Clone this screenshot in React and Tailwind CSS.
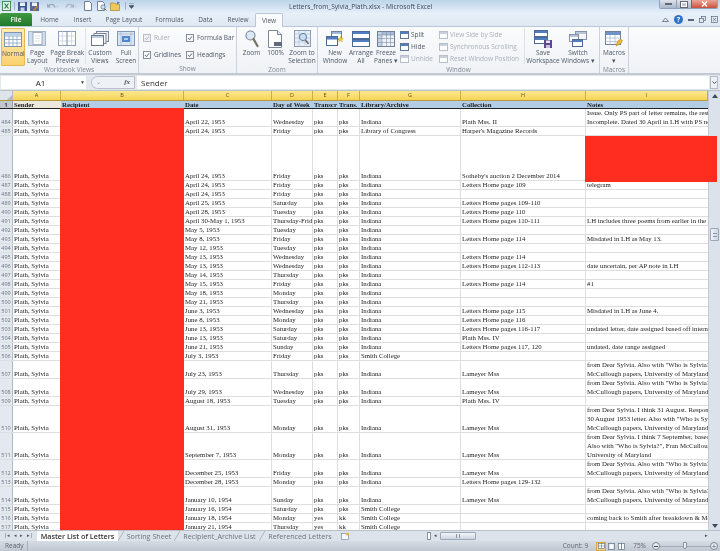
import { Fragment } from 'react'

const serif = "font-['Liberation_Serif',serif]"
const ui = "font-['Open_Sans',sans-serif]"

const heights = { 1: 'h-[9px]', 2: 'h-[18px]', 3: 'h-[27px]', 5: 'h-[45px]' }

const columns = [
  { key: 'a', w: 'w-[48px]' },
  { key: 'b', w: 'w-[123px]' },
  { key: 'c', w: 'w-[88px]' },
  { key: 'd', w: 'w-[41px]' },
  { key: 'e', w: 'w-[25px]' },
  { key: 'f', w: 'w-[22px]' },
  { key: 'g', w: 'w-[101px]' },
  { key: 'h', w: 'w-[125px]' },
  { key: 'i', w: 'w-[122px]' },
]

const colLetters = ['A', 'B', 'C', 'D', 'E', 'F', 'G', 'H', 'I']

const dear = ['from Dear Sylvia. Also with "Who is Sylvia?", Fran', 'McCullough papers, University of Maryland']

// num, lines, date, day, e, f, library, collection, notes
const rows = [
  [484, 2, 'April 22, 1953', 'Wednesday', 'pks', 'pks', 'Indiana', 'Plath Mss. II', ['Issue. Only PS part of letter remains, the rest', 'Incomplete. Dated 30 April in LH with PS note']],
  [485, 1, 'April 24, 1953', 'Friday', 'pks', 'pks', 'Library of Congress', "Harper's Magazine Records"],
  [486, 5, 'April 24, 1953', 'Friday', 'pks', 'pks', 'Indiana', "Sotheby's auction 2 December 2014"],
  [487, 1, 'April 24, 1953', 'Friday', 'pks', 'pks', 'Indiana', 'Letters Home page 109', ['telegram']],
  [488, 1, 'April 24, 1953', 'Friday', 'pks', 'pks', 'Indiana'],
  [489, 1, 'April 25, 1953', 'Saturday', 'pks', 'pks', 'Indiana', 'Letters Home pages 109-110'],
  [490, 1, 'April 28, 1953', 'Tuesday', 'pks', 'pks', 'Indiana', 'Letters Home page 110'],
  [491, 1, 'April 30-May 1, 1953', 'Thursday-Friday', 'pks', 'pks', 'Indiana', 'Letters Home pages 110-111', ['LH includes three poems from earlier in the month']],
  [492, 1, 'May 5, 1953', 'Tuesday', 'pks', 'pks', 'Indiana'],
  [493, 1, 'May 8, 1953', 'Friday', 'pks', 'pks', 'Indiana', 'Letters Home page 114', ['Misdated in LH as May 13.']],
  [494, 1, 'May 12, 1953', 'Tuesday', 'pks', 'pks', 'Indiana'],
  [495, 1, 'May 13, 1953', 'Wednesday', 'pks', 'pks', 'Indiana', 'Letters Home page 114'],
  [496, 1, 'May 13, 1953', 'Wednesday', 'pks', 'pks', 'Indiana', 'Letters Home pages 112-113', ['date uncertain, per AP note in LH']],
  [497, 1, 'May 14, 1953', 'Thursday', 'pks', 'pks', 'Indiana'],
  [498, 1, 'May 15, 1953', 'Friday', 'pks', 'pks', 'Indiana', 'Letters Home page 114', ['#1']],
  [499, 1, 'May 18, 1953', 'Monday', 'pks', 'pks', 'Indiana'],
  [500, 1, 'May 21, 1953', 'Thursday', 'pks', 'pks', 'Indiana'],
  [501, 1, 'June 3, 1953', 'Wednesday', 'pks', 'pks', 'Indiana', 'Letters Home page 115', ['Misdated in LH as June 4.']],
  [502, 1, 'June 8, 1953', 'Monday', 'pks', 'pks', 'Indiana', 'Letters Home page 116'],
  [503, 1, 'June 13, 1953', 'Saturday', 'pks', 'pks', 'Indiana', 'Letters Home pages 116-117', ['undated letter, date assigned based off internal']],
  [504, 1, 'June 13, 1953', 'Saturday', 'pks', 'pks', 'Indiana', 'Plath Mss. IV'],
  [505, 1, 'June 21, 1953', 'Sunday', 'pks', 'pks', 'Indiana', 'Letters Home pages 117, 120', ['undated, date range assigned']],
  [506, 1, 'July 3, 1953', 'Friday', 'pks', 'pks', 'Smith College'],
  [507, 2, 'July 23, 1953', 'Thursday', 'pks', 'pks', 'Indiana', 'Lameyer Mss', dear],
  [508, 2, 'July 29, 1953', 'Wednesday', 'pks', 'pks', 'Indiana', 'Lameyer Mss', dear],
  [509, 1, 'August 18, 1953', 'Tuesday', 'pks', 'pks', 'Indiana', 'Plath Mss. IV'],
  [510, 3, 'August 31, 1953', 'Monday', 'pks', 'pks', 'Indiana', 'Lameyer Mss', ['from Dear Sylvia. I think 31 August. Responds to', '30 August 1953 letter. Also with "Who is Sylvia?"', 'McCullough papers, University of Maryland']],
  [511, 3, 'September 7, 1953', 'Monday', 'pks', 'pks', 'Indiana', 'Lameyer Mss', ['from Dear Sylvia. I think 7 September, based on', 'Also with "Who is Sylvia?", Fran McCullough papers', 'University of Maryland']],
  [512, 2, 'December 25, 1953', 'Friday', 'pks', 'pks', 'Indiana', 'Lameyer Mss', dear],
  [513, 1, 'December 28, 1953', 'Monday', 'pks', 'pks', 'Indiana', 'Letters Home pages 129-132'],
  [514, 2, 'January 10, 1954', 'Sunday', 'pks', 'pks', 'Indiana', 'Lameyer Mss', dear],
  [515, 1, 'January 16, 1954', 'Saturday', 'pks', 'pks', 'Smith College'],
  [516, 1, 'January 18, 1954', 'Monday', 'yes', 'kk', 'Smith College', '', ['coming back to Smith after breakdown & McLean']],
  [517, 1, 'January 21, 1954', 'Thursday', 'yes', 'kk', 'Smith College'],
]

function Cell({ w, children, className = '' }) {
  return (
    <div className={`${w} shrink-0 h-full border-r border-[#dcdee2] pl-[1px] overflow-hidden flex flex-col justify-end whitespace-nowrap ${className}`}>
      {children}
    </div>
  )
}

function SheetRow({ row }) {
  const [num, lines, date, day, e, f, lib, coll, notes] = row
  return (
    <div className={`flex shrink-0 ${heights[lines]} border-b border-[#dcdee2] leading-[9px]`}>
      <div className={`w-[13px] shrink-0 bg-[#e4e8ef] border-r border-[#b4bac4] text-[5.5px] leading-[8px] text-[#6b7480] flex items-end justify-center ${ui}`}>{num}</div>
      <Cell w="w-[48px]">Plath, Sylvia</Cell>
      <Cell w="w-[123px]" />
      <Cell w="w-[88px]">{date}</Cell>
      <Cell w="w-[41px]">{day}</Cell>
      <Cell w="w-[25px]">{e}</Cell>
      <Cell w="w-[22px]">{f}</Cell>
      <Cell w="w-[101px]">{lib}</Cell>
      <Cell w="w-[125px]">{coll}</Cell>
      <Cell w="w-[122px]" className="border-r-0">
        {notes && notes.map((n) => <div key={n}>{n}</div>)}
      </Cell>
    </div>
  )
}

function NormalIcon() {
  return (
    <svg width="18" height="15" viewBox="0 0 18 15">
      <rect x=".5" y=".5" width="17" height="14" fill="#fff" stroke="#7d93b2" />
      <path d="M.5 4h17M.5 7.5h17M.5 11h17M5 .5v14M9 .5v14M13 .5v14" stroke="#8aa3c4" strokeWidth=".8" />
      <rect x="1" y="1" width="16" height="3" fill="#bcd0e8" />
    </svg>
  )
}

function PageLayoutIcon() {
  return (
    <svg width="18" height="15" viewBox="0 0 18 15">
      <rect x=".5" y=".5" width="17" height="14" fill="#cfdcec" stroke="#a3b4c9" />
      <rect x="5" y="1.5" width="9" height="12" fill="#fff" stroke="#8c9db3" strokeWidth=".8" />
      <path d="M7 5h5M7 7.5h5M7 10h5" stroke="#ccd6e3" strokeWidth=".7" />
    </svg>
  )
}

function BreakIcon() {
  return (
    <svg width="18" height="15" viewBox="0 0 18 15">
      <rect x=".5" y=".5" width="17" height="14" fill="#fff" stroke="#8c9db3" />
      <path d="M.5 5h17M.5 10h17M4.5 .5v14M13.5 .5v14" stroke="#c8d2de" strokeWidth=".8" />
      <path d="M9 .5v14" stroke="#7088aa" strokeWidth="1" />
    </svg>
  )
}

function CustomViewsIcon() {
  return (
    <svg width="18" height="15" viewBox="0 0 18 15">
      <rect x="5.5" y=".5" width="12" height="10" fill="#eef2f7" stroke="#7b8698" />
      <rect x="3" y="2.5" width="12" height="10" fill="#f5f7fa" stroke="#7b8698" />
      <rect x=".5" y="4.5" width="12" height="10" fill="#fff" stroke="#6a7688" />
      <rect x="1" y="5" width="11" height="2" fill="#bcd0e8" />
    </svg>
  )
}

function FullScreenIcon() {
  return (
    <svg width="18" height="15" viewBox="0 0 18 15">
      <rect x=".5" y=".5" width="17" height="14" fill="#dbe6f3" stroke="#7f96b5" />
      <path d="M.5 3h17M4 .5v14M14 .5v14" stroke="#9eb3cf" strokeWidth=".7" />
      <rect x="5" y="5" width="8" height="6" fill="#4f86cc" />
      <rect x="7" y="7" width="4" height="2" fill="#a8cdf2" />
    </svg>
  )
}

function ZoomIcon() {
  return (
    <svg width="14" height="18" viewBox="0 0 14 18">
      <circle cx="5.5" cy="5.5" r="4.5" fill="#dbe8f6" stroke="#75849a" strokeWidth="1.1" />
      <path d="M8.5 9l4 7" stroke="#77705f" strokeWidth="2.2" strokeLinecap="round" />
    </svg>
  )
}

function HundredIcon() {
  return (
    <svg width="15" height="18" viewBox="0 0 15 18">
      <path d="M.5.5h9l4 4v13H.5z" fill="#fff" stroke="#7b8698" />
      <path d="M9.5.5v4h4" fill="#e3e8ef" stroke="#7b8698" />
      <rect x="6" y="12" width="8" height="4" fill="#5f6b7c" />
    </svg>
  )
}

function SelectionIcon() {
  return (
    <svg width="17" height="17" viewBox="0 0 17 17">
      <rect x=".5" y=".5" width="16" height="16" fill="#e7eef7" stroke="#8a9bb2" />
      <path d="M.5 4h16M.5 8h16M.5 12h16M5 .5v16M11 .5v16" stroke="#b4c4d8" strokeWidth=".7" />
      <circle cx="9" cy="7" r="3.6" fill="#c9def3" stroke="#5f7da3" />
      <path d="M11.5 10l3 4" stroke="#6d6a5d" strokeWidth="1.6" />
    </svg>
  )
}

function NewWindowIcon() {
  return (
    <svg width="18" height="16" viewBox="0 0 18 16">
      <rect x="5.5" y=".5" width="10" height="8" fill="#fff" stroke="#6f7f96" />
      <rect x=".5" y="5.5" width="11" height="9" fill="#fff" stroke="#4c6a96" />
      <rect x="1" y="6" width="10" height="2.5" fill="#4f7fc0" />
      <rect x="6" y="1" width="9" height="2" fill="#9db8db" />
      <path d="M14.5 5.5l.9 1.8 1.9.3-1.4 1.3.4 1.9-1.8-1-1.8 1 .4-1.9-1.4-1.3 1.9-.3z" fill="#f3cf3d" stroke="#c59a1a" strokeWidth=".4" />
    </svg>
  )
}

function ArrangeIcon() {
  return (
    <svg width="18" height="16" viewBox="0 0 18 16">
      <rect x=".5" y=".5" width="17" height="7" fill="#fff" stroke="#4c6a96" />
      <rect x="1" y="1" width="16" height="2" fill="#4f7fc0" />
      <rect x=".5" y="8.5" width="17" height="7" fill="#fff" stroke="#4c6a96" />
      <rect x="1" y="9" width="16" height="2" fill="#4f7fc0" />
    </svg>
  )
}

function FreezeIcon() {
  return (
    <svg width="18" height="16" viewBox="0 0 18 16">
      <rect x=".5" y=".5" width="17" height="15" fill="#eef3f9" stroke="#6f7f96" />
      <rect x="1" y="1" width="16" height="3" fill="#a9bdd8" />
      <rect x="1" y="1" width="4" height="14" fill="#c4d2e4" />
      <path d="M.5 4h17M.5 7.5h17M.5 11.5h17M5 .5v15M9.5 .5v15M13.5 .5v15" stroke="#7d8ea5" strokeWidth=".6" />
    </svg>
  )
}

function SaveWorkspaceIcon() {
  return (
    <svg width="18" height="18" viewBox="0 0 18 18">
      <rect x=".5" y=".5" width="13" height="6" fill="#fff" stroke="#4c6a96" />
      <rect x="1" y="1" width="12" height="2" fill="#4f7fc0" />
      <rect x=".5" y="7.5" width="13" height="6" fill="#fff" stroke="#4c6a96" />
      <rect x="1" y="8" width="12" height="2" fill="#4f7fc0" />
      <rect x="10" y="10" width="8" height="8" fill="#5a4a8c" />
      <rect x="12" y="10.5" width="4" height="2.5" fill="#e6e4f2" />
      <rect x="12" y="15" width="4" height="3" fill="#c9c5e0" />
    </svg>
  )
}

function SwitchIcon() {
  return (
    <svg width="18" height="16" viewBox="0 0 18 16">
      <rect x="6.5" y=".5" width="11" height="8" fill="#f5f7fa" stroke="#8493a8" />
      <rect x="7" y="1" width="10" height="2" fill="#b8c6d8" />
      <rect x=".5" y="3.5" width="9" height="7" fill="#fff" stroke="#8493a8" />
      <rect x="1" y="4" width="8" height="2" fill="#b8c6d8" />
      <rect x="3.5" y="8.5" width="10" height="7" fill="#fff" stroke="#4c6a96" />
      <rect x="4" y="9" width="9" height="2" fill="#4f7fc0" />
    </svg>
  )
}

function MacrosIcon() {
  return (
    <svg width="18" height="16" viewBox="0 0 18 16">
      <rect x=".5" y=".5" width="15" height="13" fill="#fff" stroke="#6f7f96" />
      <rect x="1" y="1" width="14" height="3" fill="#6d93c8" />
      <path d="M.5 7h15M.5 10.5h15M5 4v9.5M10 4v9.5" stroke="#a8b8cc" strokeWidth=".7" />
      <path d="M11 15l1.5-5 3-2 2 1.5-1.5 3-3 1.5z" fill="#e6b93b" stroke="#a37f1e" strokeWidth=".5" />
    </svg>
  )
}

function BigButton({ icon, label, w, active, caret }) {
  return (
    <div className={`${w} shrink-0 h-[38px] flex flex-col items-center pt-[2px] ${active ? 'bg-gradient-to-b from-[#fdeeb4] to-[#f9d26f] border border-[#e5b94f] rounded-[1px]' : ''}`}>
      <div className="h-[17px] flex items-center">{icon}</div>
      <div className={`mt-[2px] text-[6.5px] leading-[7.5px] text-center text-[#4e5866] whitespace-pre ${ui}`}>
        {label}{caret ? ' ▾' : ''}
      </div>
    </div>
  )
}

function Check({ label, dim }) {
  return (
    <div className={`flex items-center gap-[3px] text-[6.5px] whitespace-nowrap ${ui} ${dim ? 'text-[#a6adb7]' : 'text-[#4e5866]'}`}>
      <svg width="8" height="8" viewBox="0 0 8 8">
        <rect x=".5" y=".5" width="7" height="7" fill={dim ? '#eef0f3' : '#f7f8fa'} stroke={dim ? '#b9bfc8' : '#868e99'} />
        <path d="M2 4l1.5 1.7L6 2.3" fill="none" stroke={dim ? '#b0b6bf' : '#5a6472'} strokeWidth=".9" />
      </svg>
      {label}
    </div>
  )
}

function SmallCommand({ label, dim, color = '#4f7fc0' }) {
  return (
    <div className={`flex items-center gap-[2px] h-[12px] text-[6.5px] whitespace-nowrap ${ui} ${dim ? 'text-[#a9b0ba]' : 'text-[#4e5866]'}`}>
      <svg width="9" height="8" viewBox="0 0 9 8">
        <rect x=".5" y=".5" width="8" height="7" fill="#fff" stroke={dim ? '#b8bfc9' : '#5f7694'} />
        <rect x="1" y="1" width="7" height="2" fill={dim ? '#c8d0da' : color} />
      </svg>
      {label}
    </div>
  )
}

function Group({ w, label, children }) {
  return (
    <div className={`${w} shrink-0 flex flex-col border-r border-[#c9d2de]`}>
      <div className="h-[39px] flex items-start pt-[1px]">{children}</div>
      <div className={`h-[8px] text-center text-[6.5px] leading-[8px] text-[#7d8794] ${ui}`}>{label}</div>
    </div>
  )
}

function Qat() {
  return (
    <div className="flex items-center gap-[3px] pl-[2px]">
      <svg width="9" height="10" viewBox="0 0 9 10"><rect width="9" height="10" fill="#1f7a3c" /><rect x=".8" y=".8" width="7.4" height="8.4" fill="#e7f2e6" /><path d="M2.5 2.5l4 5M6.5 2.5l-4 5" stroke="#1f7a3c" strokeWidth="1.2" /></svg>
      <div className="w-[1px] h-[8px] bg-[#9fb2c8]" />
      <svg width="9" height="9" viewBox="0 0 9 9"><rect width="9" height="9" fill="#3d5a96" /><rect x="2" y=".5" width="5" height="3.5" fill="#eef2f8" /><rect x="2.5" y="5.5" width="4" height="3.5" fill="#c5d0e4" /></svg>
      <svg width="9" height="9" viewBox="0 0 9 9"><rect width="9" height="9" fill="#5a6a96" /><rect x="2" y=".5" width="5" height="3.5" fill="#eef2f8" /><path d="M3 8l4-4 1 1-4 4z" fill="#d9822b" /></svg>
      <svg className="ml-[4px]" width="13" height="9" viewBox="0 0 13 9"><path d="M2 4.5c2-3 6-3 7 1" fill="none" stroke="#9aa8b8" strokeWidth="1.3" /><path d="M1 1.5v4h4z" fill="#9aa8b8" /><path d="M11 3.5l1 1-1 1" fill="none" stroke="#9aa8b8" strokeWidth=".7" /></svg>
      <svg className="ml-[2px]" width="13" height="9" viewBox="0 0 13 9"><path d="M9 4.5c-2-3-6-3-7 1" fill="none" stroke="#a8b4c2" strokeWidth="1.3" /><path d="M10 1.5v4H6z" fill="#a8b4c2" /><path d="M12 3.5l-1 1 1 1" fill="none" stroke="#a8b4c2" strokeWidth=".7" /></svg>
      <svg className="ml-[4px]" width="8" height="10" viewBox="0 0 8 10"><path d="M.5.5h5l2 2v7h-7z" fill="#fff" stroke="#6f7f96" /></svg>
      <svg className="ml-[2px]" width="10" height="10" viewBox="0 0 10 10"><path d="M.5.5h5l2 2v7h-7z" fill="#fff" stroke="#6f7f96" /><circle cx="6" cy="6" r="2.2" fill="#cfe0f3" stroke="#55697f" strokeWidth=".7" /><path d="M7.5 7.5L9.5 9.5" stroke="#8a6c2e" /></svg>
      <svg width="11" height="10" viewBox="0 0 11 10"><path d="M.5 2h4l1 1h4v6.5h-9z" fill="#efc85a" stroke="#a98525" strokeWidth=".7" /><path d="M7 .5l3 1-3 2z" fill="#4f7fc0" /></svg>
      <div className="w-[1px] h-[8px] bg-[#9fb2c8] ml-[1px]" />
      <svg width="5" height="6" viewBox="0 0 5 6"><path d="M0 0h5M0 2.5h5L2.5 5.5z" stroke="#45525f" strokeWidth=".6" fill="#45525f" /></svg>
    </div>
  )
}

function WindowButtons() {
  return (
    <div className="flex h-[9px] mr-[2px] rounded-b-[2px] overflow-hidden border border-t-0 border-[#8fa2b8]">
      <div className="w-[16px] bg-gradient-to-b from-[#dce3ec] to-[#aab8c8] flex items-center justify-center">
        <div className="w-[7px] h-[2px] bg-white border-[0.5px] border-[#667]" />
      </div>
      <div className="w-[15px] border-l border-[#8fa2b8] bg-gradient-to-b from-[#dce3ec] to-[#aab8c8] flex items-center justify-center">
        <div className="w-[6px] h-[5px] border border-white outline-[0.5px] outline-[#667]" />
      </div>
      <div className="w-[26px] border-l border-[#8f5a5a] bg-gradient-to-b from-[#e9a79a] to-[#c9503f] flex items-center justify-center text-white text-[7px] leading-none font-bold">
        <svg width="7" height="6" viewBox="0 0 7 6"><path d="M1 .5l5 5M6 .5l-5 5" stroke="#fff" strokeWidth="1.3" /></svg>
      </div>
    </div>
  )
}

function Tabs() {
  const tabs = [
    ['Home', 'w-[33px]'],
    ['Insert', 'w-[33px]'],
    ['Page Layout', 'w-[50px]'],
    ['Formulas', 'w-[41px]'],
    ['Data', 'w-[31px]'],
    ['Review', 'w-[34px]'],
  ]
  return (
    <div className="flex items-end h-[14px] border-b border-[#b9c7d8]">
      <div className={`w-[32px] h-[13px] bg-gradient-to-b from-[#3f9a3f] to-[#1e7a2d] rounded-t-[2px] text-white text-[6.5px] font-semibold flex items-center justify-center ${ui}`}>File</div>
      {/* small gap to line up with Home */}
      <div className="w-[1px]" />
      {tabs.map(([t, w]) => (
        <div key={t} className={`${w} h-[13px] text-[6.5px] text-[#4e5866] flex items-center justify-center ${ui}`}>{t}</div>
      ))}
      <div className={`w-[28px] h-[14px] -mb-[1px] bg-[#fafbfc] border border-b-0 border-[#b9c7d8] rounded-t-[2px] text-[6.5px] text-[#4e5866] flex items-center justify-center ${ui}`}>View</div>
      <div className="flex-1 flex items-center justify-end gap-[5px] h-[13px] pr-[2px]">
        <svg width="7" height="5" viewBox="0 0 7 5"><path d="M.5 4.5l3-3.5 3 3.5z" fill="none" stroke="#5a6a7c" strokeWidth=".8" /></svg>
        <div className="w-[9px] h-[9px] rounded-full bg-[#2f73c6] text-white text-[7px] leading-[9px] text-center font-bold">?</div>
        <div className="w-[6px] h-[2px] bg-[#e5ebf2] border-[0.5px] border-[#5a6a7c]" />
        <svg width="7" height="7" viewBox="0 0 7 7"><rect x="2.5" y=".5" width="4" height="4" fill="#dfe6ee" stroke="#5a6a7c" strokeWidth=".7" /><rect x=".5" y="2.5" width="4" height="4" fill="#dfe6ee" stroke="#5a6a7c" strokeWidth=".7" /></svg>
        <svg width="7" height="7" viewBox="0 0 7 7"><rect x=".5" y=".5" width="6" height="6" fill="#dfe6ee" stroke="#5a6a7c" strokeWidth=".7" /><path d="M2 2l3 3M5 2L2 5" stroke="#5a6a7c" strokeWidth=".7" /></svg>
      </div>
    </div>
  )
}

function Ribbon() {
  return (
    <div className="h-[48px] flex bg-gradient-to-b from-[#fafbfc] to-[#eff2f6] border-b-2 border-[#c3c9d1]">
      <Group w="w-[139px]" label="Workbook Views">
        <div className="w-[2px]" />
        <BigButton w="w-[24px]" active icon={<NormalIcon />} label="Normal" />
        <BigButton w="w-[24px]" icon={<PageLayoutIcon />} label={'Page\nLayout'} />
        <BigButton w="w-[36px]" icon={<BreakIcon />} label={'Page Break\nPreview'} />
        <div className="w-[1px] h-[36px] bg-[#dde2e9]" />
        <BigButton w="w-[28px]" icon={<CustomViewsIcon />} label={'Custom\nViews'} />
        <BigButton w="w-[24px]" icon={<FullScreenIcon />} label={'Full\nScreen'} />
      </Group>
      <Group w="w-[98px]" label="Show">
        <div className="flex flex-col gap-[7px] pl-[4px] pt-[5px] w-[46px]">
          <Check label="Ruler" dim />
          <Check label="Gridlines" />
        </div>
        <div className="flex flex-col gap-[7px] pl-[1px] pt-[5px]">
          <Check label="Formula Bar" />
          <Check label="Headings" />
        </div>
      </Group>
      <Group w="w-[81px]" label="Zoom">
        <div className="w-[2px]" />
        <BigButton w="w-[25px]" icon={<ZoomIcon />} label="Zoom" />
        <BigButton w="w-[23px]" icon={<HundredIcon />} label="100%" />
        <BigButton w="w-[30px]" icon={<SelectionIcon />} label={'Zoom to\nSelection'} />
      </Group>
      <Group w="w-[282px]" label="Window">
        <div className="w-[3px]" />
        <BigButton w="w-[28px]" icon={<NewWindowIcon />} label={'New\nWindow'} />
        <BigButton w="w-[24px]" icon={<ArrangeIcon />} label={'Arrange\nAll'} />
        <BigButton w="w-[26px]" icon={<FreezeIcon />} label={'Freeze\nPanes ▾'} />
        <div className="flex flex-col pl-[1px] pt-[1px] w-[40px]">
          <SmallCommand label="Split" />
          <SmallCommand label="Hide" />
          <SmallCommand label="Unhide" dim />
        </div>
        <div className="flex flex-col pt-[1px] w-[85px]">
          <SmallCommand label="View Side by Side" dim />
          <SmallCommand label="Synchronous Scrolling" dim />
          <SmallCommand label="Reset Window Position" dim />
        </div>
        <div className="w-[1px] h-[36px] bg-[#dde2e9]" />
        <BigButton w="w-[36px]" icon={<SaveWorkspaceIcon />} label={'Save\nWorkspace'} />
        <BigButton w="w-[34px]" icon={<SwitchIcon />} label={'Switch\nWindows ▾'} />
      </Group>
      <Group w="w-[29px]" label="Macros">
        <BigButton w="w-[28px]" icon={<MacrosIcon />} label={'Macros\n▾'} />
      </Group>
    </div>
  )
}

function FormulaBar() {
  return (
    <div className="h-[16px] flex items-center bg-[#e3e8ee] border-b border-[#b9c0ca]">
      <div className={`ml-[1px] w-[85px] h-[13px] bg-white flex items-center text-[8px] text-[#222] ${ui}`}>
        <div className="flex-1 text-center">A1</div>
        <span className="text-[5px] text-[#444] pr-[1px]">▼</span>
      </div>
      <div className="ml-[5px] w-[44px] h-[13px] rounded-l-full border border-[#b9c0ca] bg-[#eef1f5] flex items-center justify-between px-[4px] text-[#8a929c] text-[7px]">
        <span className="text-[6px]">⌄</span>
        <span className={`italic font-bold text-[7px] text-[#49515c] ${serif}`}>fx</span>
      </div>
      <div className={`ml-[2px] flex-1 h-[13px] bg-white flex items-center pl-[4px] text-[8px] text-[#333] ${ui}`}>Sender</div>
      <div className="w-[8px] h-[13px] ml-[1px] mr-[2px] bg-[#eef1f5] border border-[#b4bac4] flex items-center justify-center">
        <svg width="5" height="3" viewBox="0 0 5 3"><path d="M.5.5l2 2 2-2" fill="none" stroke="#44505c" /></svg>
      </div>
    </div>
  )
}

function ColumnHeaders() {
  return (
    <div className={`h-[10px] shrink-0 flex bg-gradient-to-b from-[#fce98d] to-[#f6d355] border-b border-[#b69a3c] text-[5.5px] leading-[9px] text-[#66511a] ${ui}`}>
      <div className="w-[13px] shrink-0 bg-[#dfe3ea] border-r border-[#b4bac4] flex items-end justify-end">
        <svg width="5" height="5" viewBox="0 0 5 5"><path d="M5 0v5H0z" fill="#b3bac4" /></svg>
      </div>
      {columns.map((c, i) => (
        <div key={c.key} className={`${c.w} shrink-0 text-center border-r border-[#d0ab44]`}>{colLetters[i]}</div>
      ))}
    </div>
  )
}

function TitleRow() {
  const titles = ['Sender', 'Recipient', 'Date', 'Day of Week', 'Transcr', 'Trans.', 'Library/Archive', 'Collection', 'Notes']
  return (
    <div className="h-[8px] shrink-0 flex bg-[#b3cde6] border-b border-[#222] font-bold leading-[8px]">
      <div className={`w-[13px] shrink-0 bg-[#c3c8d0] border-r border-[#9aa2ad] text-[6px] text-[#444] flex items-center justify-center ${ui}`}>1</div>
      {columns.map((c, i) => (
        <div key={c.key} className={`${c.w} shrink-0 pl-[1px] whitespace-nowrap overflow-hidden ${i === 0 ? 'bg-[#ece8dc]' : ''}`}>
          {titles[i]}
        </div>
      ))}
    </div>
  )
}

function VScroll() {
  return (
    <div className="w-[12px] shrink-0 flex flex-col bg-[#dbe2eb] border-l border-[#c2cad5]">
      <div className="h-[10px] flex items-center justify-center">
        <svg width="6" height="4" viewBox="0 0 6 4"><path d="M3 0l3 4H0z" fill="#3f4b58" /></svg>
      </div>
      <div className="h-[127px]" />
      <div className="h-[13px] mx-[1px] bg-gradient-to-r from-[#f1f4f8] to-[#cdd6e2] border border-[#9aa7b8] rounded-[1px] flex items-center justify-center">
        <div className="w-[4px] h-[4px] border-y border-[#8793a3]" />
      </div>
      <div className="flex-1" />
      <div className="h-[9px] flex items-center justify-center">
        <svg width="6" height="4" viewBox="0 0 6 4"><path d="M3 4l3-4H0z" fill="#3f4b58" /></svg>
      </div>
    </div>
  )
}

function SheetTabs() {
  const others = [
    ['Sorting Sheet', 'w-[50px]'],
    ['Recipient_Archive List', 'w-[79px]'],
    ['Referenced Letters', 'w-[70px]'],
  ]
  return (
    <div className={`h-[11px] shrink-0 flex items-center bg-[#dde3ea] border-t border-[#b9c0ca] text-[#6a7480] text-[7.2px] ${ui}`}>
      <div className="w-[37px] shrink-0 flex items-center justify-around px-[2px] text-[5px] text-[#45525f]">
        <span>|◂</span><span>◂</span><span>▸</span><span>▸|</span>
      </div>
      <div className="h-full w-[81px] shrink-0 bg-white text-[#333] font-semibold flex items-center justify-center whitespace-nowrap">Master List of Letters</div>
      {others.map(([t, w]) => (
        <Fragment key={t}>
          <svg width="6" height="10" viewBox="0 0 6 10" className="shrink-0"><path d="M0 10L6 0" stroke="#9aa3ae" strokeWidth=".7" /></svg>
          <div className={`${w} shrink-0 text-center whitespace-nowrap`}>{t}</div>
        </Fragment>
      ))}
      <svg width="10" height="9" viewBox="0 0 10 9" className="shrink-0 ml-[5px]"><rect x="1.5" y="1.5" width="7" height="6" fill="#f8f9fb" stroke="#7c8aa0" strokeWidth=".7" /><circle cx="7.5" cy="2" r="1.6" fill="#e3b53a" /></svg>
      <div className="flex-1" />
      <div className="w-[293px] shrink-0 flex items-center h-full pr-[12px]">
        <div className="w-[4px] h-[8px] border border-[#8793a3] bg-white" />
        <span className="ml-[3px] text-[5px] text-[#3f4b58]">◂</span>
        <div className="ml-[3px] w-[36px] h-[8px] bg-gradient-to-b from-[#f3f6f9] to-[#ccd5e0] border border-[#9aa7b8] rounded-[1px] flex items-center justify-center">
          <div className="w-[4px] h-[4px] border-x border-[#8793a3]" />
        </div>
        <div className="flex-1" />
        <span className="text-[5px] text-[#3f4b58]">▸</span>
      </div>
    </div>
  )
}

function StatusBar() {
  return (
    <div className={`h-[10px] shrink-0 flex items-center bg-gradient-to-b from-[#d6dce3] to-[#bfc7d1] text-[6.5px] text-[#5d6672] ${ui}`}>
      <div className="pl-[5px] w-[28px] border-r border-[#a8b0ba] h-full leading-[10px]">Ready</div>
      <div className="flex-1" />
      <span>Count: 9</span>
      <div className="ml-[8px] w-[10px] h-[9px] bg-[#f7d775] border border-[#d7a93e] flex items-center justify-center">
        <svg width="7" height="6" viewBox="0 0 7 6"><rect x=".5" y=".5" width="6" height="5" fill="#fff" stroke="#667a95" strokeWidth=".7" /><path d="M.5 3h6M3.5.5v5" stroke="#667a95" strokeWidth=".6" /></svg>
      </div>
      <svg className="ml-[2px]" width="7" height="7" viewBox="0 0 7 7"><rect x=".5" y=".5" width="6" height="6" fill="#dde4ee" stroke="#5d6f88" strokeWidth=".7" /><rect x="2" y="1.5" width="3" height="4" fill="#fff" /></svg>
      <svg className="ml-[3px]" width="7" height="7" viewBox="0 0 7 7"><rect x=".5" y=".5" width="6" height="6" fill="#fff" stroke="#5d6f88" strokeWidth=".7" /><path d="M3.5.5v6" stroke="#5d6f88" strokeWidth=".8" /></svg>
      <span className="ml-[8px]">75%</span>
      <div className="ml-[6px] w-[8px] h-[8px] rounded-full border border-[#7d8894] bg-[#e8ecf0] flex items-center justify-center">
        <div className="w-[4px] h-[1px] bg-[#444]" />
      </div>
      <div className="w-[50px] h-full flex items-center relative">
        <div className="w-full h-[1px] bg-[#a3abb5]" />
        <div className="absolute left-[23px] top-[1px] w-[4px] h-[7px] bg-[#eef1f4] border border-[#8a939e] rounded-b-[2px]" />
      </div>
      <div className="mr-[2px] w-[8px] h-[8px] rounded-full border border-[#7d8894] bg-[#e8ecf0] flex items-center justify-center text-[7px] leading-none text-[#444]">+</div>
    </div>
  )
}

export default function App() {
  return (
    <div className="w-[720px] h-[551px] overflow-hidden flex flex-col bg-white blur-[0.35px]">
      {/* Title bar */}
      <div className="h-[27px] shrink-0 bg-gradient-to-b from-[#bed4ea] via-[#e7f0f9] to-[#dfe8f2] flex flex-col">
        <div className="h-[13px] flex items-start justify-between relative">
          <div className="pt-[1px]"><Qat /></div>
          <div className={`absolute left-[289px] top-[2px] text-[6.6px] leading-[10px] text-[#3d4a5a] whitespace-nowrap ${ui}`}>
            Letters_from_Sylvia_Plath.xlsx - Microsoft Excel
          </div>
          <WindowButtons />
        </div>
        <Tabs />
      </div>

      <Ribbon />
      <FormulaBar />

      {/* Sheet */}
      <div className="flex-1 min-h-0 flex relative overflow-hidden">
        <div className={`flex-1 min-w-0 flex flex-col overflow-hidden text-[6.8px] text-[#1c1c1c] ${serif}`}>
          <ColumnHeaders />
          <TitleRow />
          {rows.map((r) => (
            <SheetRow key={r[0]} row={r} />
          ))}
        </div>
        <VScroll />
        {/* redactions */}
        <div className="absolute left-[60px] top-[17px] w-[124px] bottom-0 bg-[#ff2d20]" />
        <div className="absolute left-[585px] top-[45px] w-[132px] h-[46px] bg-[#ff2d20]" />
      </div>

      <SheetTabs />
      <StatusBar />
    </div>
  )
}
